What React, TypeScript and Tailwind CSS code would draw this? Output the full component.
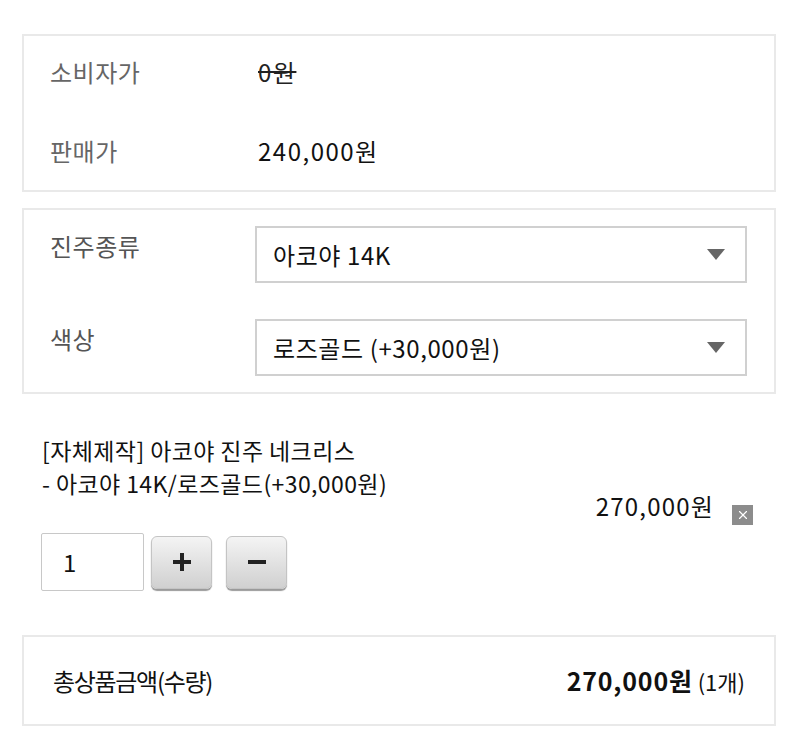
import { X } from 'lucide-react';

const font = { fontFamily: '"Noto Sans CJK KR", "Noto Sans", sans-serif' };

const Select = ({ value }: { value: string }) => (
  <div className="flex-1 h-[57px] border-2 border-[#d0d0d0] bg-white flex items-center justify-between pl-[16px] pr-[20px]">
    <span className="text-[24px] tracking-[0.6px] text-[#111]">{value}</span>
    <svg width="18" height="11" viewBox="0 0 18 11">
      <path d="M0 0 L18 0 L9 11 Z" fill="#666" />
    </svg>
  </div>
);

const StepButton = ({ children }: { children: React.ReactNode }) => (
  <button className="w-[61px] h-[53px] rounded-[6px] bg-gradient-to-b from-[#f4f4f4] to-[#d0d0d0] border border-[#c4c4c4] shadow-[0_2px_1px_#9a9a9a] flex items-center justify-center">
    {children}
  </button>
);

export default function App() {
  return (
    <div className="w-[800px] h-[743px] bg-white pt-[34px] px-[22px]" style={font}>
      <div className="w-[754px] border-2 border-[#e9e9e9] pl-[26px] pt-[16px] pb-[19px] flex flex-col gap-[39px]">
        <div className="flex items-center h-[40px]">
          <span className="w-[208px] text-[24px] tracking-[0.5px] text-[#666]">소비자가</span>
          <span className="text-[24px] tracking-[1.5px] text-[#222] line-through">0원</span>
        </div>
        <div className="flex items-center h-[40px]">
          <span className="w-[208px] text-[24px] tracking-[0.5px] text-[#666]">판매가</span>
          <span className="text-[24px] tracking-[1.5px] text-[#111]">240,000원</span>
        </div>
      </div>

      <div className="w-[754px] mt-[16px] border-2 border-[#e9e9e9] pl-[26px] pr-[27px] pt-[16px] pb-[16px] flex flex-col gap-[36px]">
        <div className="flex items-start">
          <span className="w-[205px] text-[24px] tracking-[0.5px] text-[#555] pt-[2px]">진주종류</span>
          <Select value="아코야 14K" />
        </div>
        <div className="flex items-start">
          <span className="w-[205px] text-[24px] tracking-[0.5px] text-[#555] pt-[2px]">색상</span>
          <Select value="로즈골드 (+30,000원)" />
        </div>
      </div>

      <div className="mt-[40px] pl-[20px] text-[23px] tracking-[0.4px] text-[#111] leading-[33px]">
        <p>[자체제작] 아코야 진주 네크리스</p>
        <p>- 아코야 14K/로즈골드(+30,000원)</p>
      </div>
      <div className="flex justify-end items-end gap-[20px] pr-[25px] -mt-[12px]">
        <span className="text-[24px] tracking-[1.2px] text-[#111] mr-[-2px]">270,000원</span>
        <span className="w-[21px] h-[20px] mb-[-1px] bg-[#8c8c8c] flex items-center justify-center">
          <X size={14} color="#fff" strokeWidth={2} />
        </span>
      </div>

      <div className="flex items-center pl-[19px] mt-[9px]">
        <div className="w-[103px] h-[58px] border border-[#c8c8c8] rounded-[2px] flex items-center pl-[21px] text-[24px] text-[#111]">1</div>
        <div className="ml-[7px]">
          <StepButton>
            <svg width="22" height="22" viewBox="0 0 22 22">
              <path d="M11 2 V20 M2 11 H20" stroke="#222" strokeWidth="4" />
            </svg>
          </StepButton>
        </div>
        <div className="ml-[14px]">
          <StepButton>
            <svg width="22" height="22" viewBox="0 0 22 22">
              <path d="M2 11 H20" stroke="#222" strokeWidth="4" />
            </svg>
          </StepButton>
        </div>
      </div>

      <div className="w-[754px] mt-[44px] h-[91px] border-2 border-[#e9e9e9] flex items-center justify-between pl-[29px] pr-[29px]">
        <span className="text-[24px] tracking-[-1.3px] text-[#111]">총상품금액(수량)</span>
        <span className="text-[#111]">
          <b className="text-[25px] tracking-[0.8px] font-bold text-[#111]">270,000원</b>
          <span className="text-[22px] text-[#111]"> (1개)</span>
        </span>
      </div>
    </div>
  );
}
